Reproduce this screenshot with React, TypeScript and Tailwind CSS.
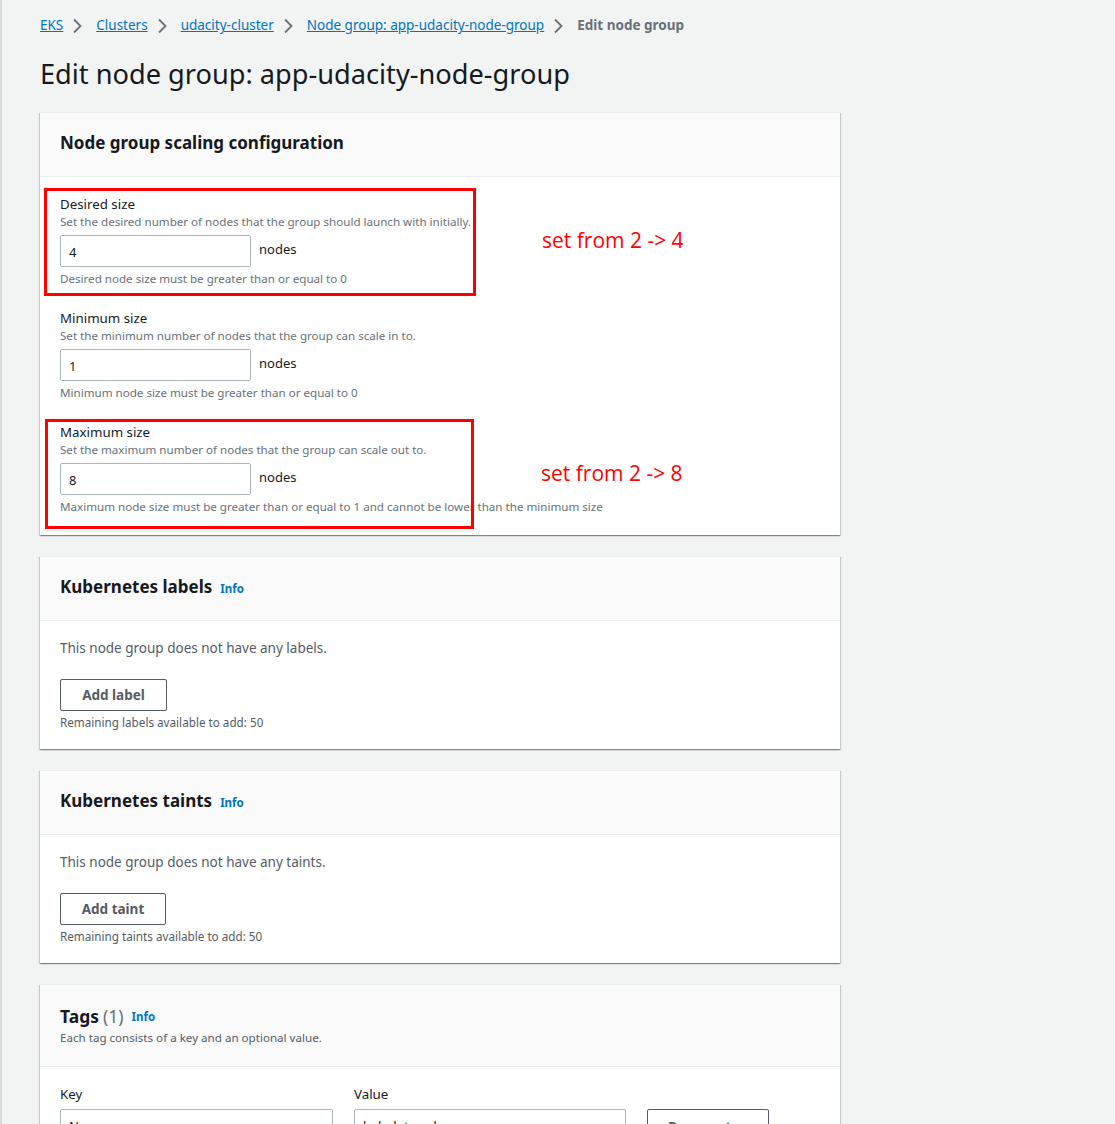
import React from 'react';

const font = { fontFamily: '"Noto Sans", "Open Sans", sans-serif' };

const Chevron = () => (
  <svg width="16" height="16" viewBox="0 0 16 16" className="ml-[6px] mr-[11px] text-[#687078]">
    <path d="M5 1.5 11.5 8 5 14.5" fill="none" stroke="currentColor" strokeWidth="1.8" />
  </svg>
);

const Card: React.FC<{ header: React.ReactNode; children: React.ReactNode }> = ({ header, children }) => (
  <div className="w-[800px] bg-white border-t border-[#eaeded] shadow-[0_1px_1px_0_rgba(0,28,36,0.3),1px_1px_1px_0_rgba(0,28,36,0.15),-1px_1px_1px_0_rgba(0,28,36,0.15)]">
    <div className="bg-[#fafafa] border-b border-[#eaeded] px-5">{header}</div>
    <div className="px-5">{children}</div>
  </div>
);

const Info = () => <span className="ml-2 mt-[3px] text-[11.5px] font-bold text-[#0073bb]">Info</span>;

const SizeField: React.FC<{ label: string; desc: string; value: string; hint: string }> = ({ label, desc, value, hint }) => (
  <div className="flex flex-col">
    <div className="text-[13.3px] leading-[20px] text-[#16191f]">{label}</div>
    <div className="text-[11.6px] leading-[16px] text-[#687078]">{desc}</div>
    <div className="flex items-start mt-[5px]">
      <div className="w-[191px] h-[32px] border border-[#aab7b8] rounded-[2px] px-2 flex items-center pt-[3px] text-[13px] text-[#16191f]">{value}</div>
      <div className="ml-2 text-[13px] leading-[32px] text-[#16191f] -mt-[2px]">nodes</div>
    </div>
    <div className="text-[11.6px] leading-[16px] text-[#687078] mt-[4px]">{hint}</div>
  </div>
);

const EmptySection: React.FC<{ text: string; button: string; width: string; remaining: string }> = ({ text, button, width, remaining }) => (
  <div className="pt-[17px] pb-[19px]">
    <div className="text-[13.5px] leading-[20px] text-[#545b64]">{text}</div>
    <button className={`mt-[21px] ${width} h-[32px] border border-[#545b64] rounded-[2px] text-[13.5px] font-bold text-[#545b64]`}>{button}</button>
    <div className="mt-[3px] text-[11.7px] leading-[16px] text-[#545b64]">{remaining}</div>
  </div>
);

export default function App() {
  return (
    <div style={font} className="min-h-[1124px] bg-[#f2f3f3] border-l-2 border-[#d5dbdb] pl-[38px] overflow-hidden">
      <nav className="flex items-center pt-[16px] h-[35px] text-[13.5px] text-[#0073bb]">
        <a className="underline">EKS</a>
        <Chevron />
        <a className="underline">Clusters</a>
        <Chevron />
        <a className="underline">udacity-cluster</a>
        <Chevron />
        <a className="underline">Node group: app-udacity-node-group</a>
        <Chevron />
        <span className="font-bold text-[#687078]">Edit node group</span>
      </nav>
      <h1 className="mt-[20px] text-[27.2px] leading-[38px] text-[#16191f]">Edit node group: app-udacity-node-group</h1>

      <div className="mt-[19px] flex flex-col gap-[21px]">
        <Card
          header={<h2 className="h-[63px] pb-[3px] flex items-center text-[17px] font-bold text-[#16191f]">Node group scaling configuration</h2>}
        >
          <div className="relative pt-[17px] pb-[20px] flex flex-col gap-[21px]">
            <SizeField
              label="Desired size"
              desc="Set the desired number of nodes that the group should launch with initially."
              value="4"
              hint="Desired node size must be greater than or equal to 0"
            />
            <SizeField
              label="Minimum size"
              desc="Set the minimum number of nodes that the group can scale in to."
              value="1"
              hint="Minimum node size must be greater than or equal to 0"
            />
            <SizeField
              label="Maximum size"
              desc="Set the maximum number of nodes that the group can scale out to."
              value="8"
              hint="Maximum node size must be greater than or equal to 1 and cannot be lower than the minimum size"
            />
            {/* annotations drawn over the form */}
            <div className="absolute left-[-16px] top-[11px] w-[432px] h-[108px] border-[3px] border-[#ff0000]" />
            <div className="absolute left-[-15px] top-[242px] w-[429px] h-[110px] border-[3px] border-[#ff0000]" />
            <div style={{ fontFamily: '"Open Sans", sans-serif' }} className="absolute left-[482px] top-[48px] text-[21px] text-[#ff0000]">set from 2 -&gt; 4</div>
            <div style={{ fontFamily: '"Open Sans", sans-serif' }} className="absolute left-[481px] top-[281px] text-[21px] text-[#ff0000]">set from 2 -&gt; 8</div>
          </div>
        </Card>

        <Card
          header={<h2 className="h-[63px] pb-[3px] flex items-center text-[17px] font-bold text-[#16191f]">Kubernetes labels<Info /></h2>}
        >
          <EmptySection
            text="This node group does not have any labels."
            button="Add label"
            width="w-[107px]"
            remaining="Remaining labels available to add: 50"
          />
        </Card>

        <Card
          header={<h2 className="h-[63px] pb-[3px] flex items-center text-[17px] font-bold text-[#16191f]">Kubernetes taints<Info /></h2>}
        >
          <EmptySection
            text="This node group does not have any taints."
            button="Add taint"
            width="w-[106px]"
            remaining="Remaining taints available to add: 50"
          />
        </Card>

        <Card
          header={
            <div className="pt-[16px] pb-[20px]">
              <h2 className="flex items-center text-[17.5px] leading-[26px] font-bold text-[#16191f]">
                Tags<span className="ml-1 font-normal text-[#687078]">(1)</span>
                <Info />
              </h2>
              <div className="text-[11.6px] leading-[16px] text-[#545b64]">Each tag consists of a key and an optional value.</div>
            </div>
          }
        >
          <div className="pt-[17px] pb-[20px]">
            <div className="flex gap-[21px]">
              <div className="flex flex-col">
                <div className="text-[13.3px] leading-[20px] text-[#16191f]">Key</div>
                <div className="mt-[5px] w-[273px] h-[32px] border border-[#aab7b8] rounded-[2px] px-2 flex items-center pt-[4px] text-[13px] text-[#16191f]">Name</div>
              </div>
              <div className="flex flex-col">
                <div className="text-[13.3px] leading-[20px] text-[#16191f]">Value</div>
                <div className="mt-[5px] w-[272px] h-[32px] border border-[#aab7b8] rounded-[2px] px-2 flex items-center pt-[4px] text-[13px] text-[#16191f]">kubelet-node</div>
              </div>
              <div className="flex flex-col">
                <div className="h-[20px]" />
                <button className="mt-[5px] w-[122px] h-[32px] border border-[#545b64] rounded-[2px] pt-[4px] text-[13.5px] font-bold text-[#545b64]">Remove tag</button>
              </div>
            </div>
          </div>
        </Card>
      </div>
    </div>
  );
}
